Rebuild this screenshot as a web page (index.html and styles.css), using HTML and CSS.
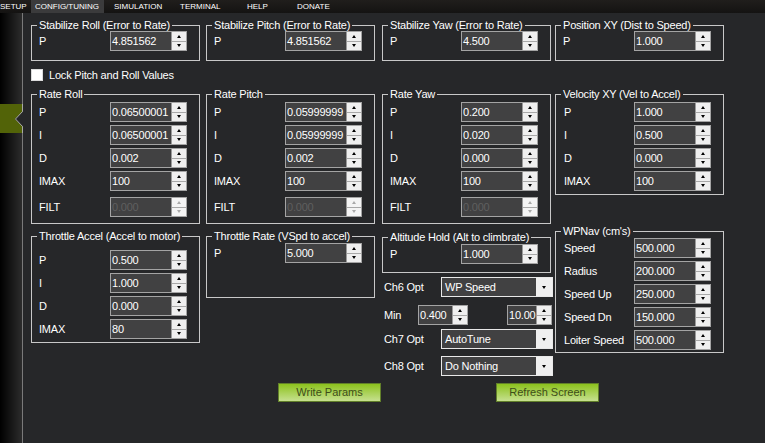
FILE: index.html
```html
<!DOCTYPE html>
<html>
<head>
<meta charset="utf-8">
<link rel="stylesheet" href="styles.css">
</head>
<body>
<div class="topbar">
  <span class="t t-setup">SETUP</span>
  <span class="t t-active">CONFIG/TUNING</span>
  <span class="t t-sim">SIMULATION</span>
  <span class="t t-term">TERMINAL</span>
  <span class="t t-help">HELP</span>
  <span class="t t-don">DONATE</span>
</div>
<div class="main">
  <div class="sidebar">
    <div class="navtab">
      <svg width="23" height="29" viewBox="0 0 23 29">
        <rect x="0" y="0" width="22" height="29" fill="#526308"/>
        <polygon points="23,7.5 15,15 23,22.5" fill="#262729"/>
        <polyline points="22.5,0 22.5,7.5 15.5,15 22.5,22.5 22.5,29" fill="none" stroke="#a8a8a8" stroke-width="1"/>
      </svg>
    </div>
  </div>
  <div class="content">
    <div class="row">
      <div class="group g-stab">
        <span class="legend">Stabilize Roll (Error to Rate)</span>
        <div class="fields">
          <div class="f"><span>P</span><div class="spin"><span class="v">4.851562</span><span class="btns"><span class="b"><i class="up"></i></span><span class="b"><i class="dn"></i></span></span></div></div>
        </div>
      </div>
      <div class="group g-stab">
        <span class="legend">Stabilize Pitch (Error to Rate)</span>
        <div class="fields">
          <div class="f"><span>P</span><div class="spin"><span class="v">4.851562</span><span class="btns"><span class="b"><i class="up"></i></span><span class="b"><i class="dn"></i></span></span></div></div>
        </div>
      </div>
      <div class="group g-stab">
        <span class="legend">Stabilize Yaw (Error to Rate)</span>
        <div class="fields">
          <div class="f"><span>P</span><div class="spin"><span class="v">4.500</span><span class="btns"><span class="b"><i class="up"></i></span><span class="b"><i class="dn"></i></span></span></div></div>
        </div>
      </div>
      <div class="group g-stab">
        <span class="legend">Position XY (Dist to Speed)</span>
        <div class="fields">
          <div class="f"><span>P</span><div class="spin"><span class="v">1.000</span><span class="btns"><span class="b"><i class="up"></i></span><span class="b"><i class="dn"></i></span></span></div></div>
        </div>
      </div>
    </div>

    <div class="check"><span class="box"></span><span>Lock Pitch and Roll Values</span></div>

    <div class="row">
      <div class="group g-rate">
        <span class="legend">Rate Roll</span>
        <div class="fields">
          <div class="f"><span>P</span><div class="spin"><span class="v">0.06500001</span><span class="btns"><span class="b"><i class="up"></i></span><span class="b"><i class="dn"></i></span></span></div></div>
          <div class="f"><span>I</span><div class="spin"><span class="v">0.06500001</span><span class="btns"><span class="b"><i class="up"></i></span><span class="b"><i class="dn"></i></span></span></div></div>
          <div class="f"><span>D</span><div class="spin"><span class="v">0.002</span><span class="btns"><span class="b"><i class="up"></i></span><span class="b"><i class="dn"></i></span></span></div></div>
          <div class="f"><span>IMAX</span><div class="spin"><span class="v">100</span><span class="btns"><span class="b"><i class="up"></i></span><span class="b"><i class="dn"></i></span></span></div></div>
          <div class="f filt"><span>FILT</span><div class="spin dis"><span class="v">0.000</span><span class="btns"><span class="b"><i class="up"></i></span><span class="b"><i class="dn"></i></span></span></div></div>
        </div>
      </div>
      <div class="group g-rate">
        <span class="legend">Rate Pitch</span>
        <div class="fields">
          <div class="f"><span>P</span><div class="spin"><span class="v">0.05999999</span><span class="btns"><span class="b"><i class="up"></i></span><span class="b"><i class="dn"></i></span></span></div></div>
          <div class="f"><span>I</span><div class="spin"><span class="v">0.05999999</span><span class="btns"><span class="b"><i class="up"></i></span><span class="b"><i class="dn"></i></span></span></div></div>
          <div class="f"><span>D</span><div class="spin"><span class="v">0.002</span><span class="btns"><span class="b"><i class="up"></i></span><span class="b"><i class="dn"></i></span></span></div></div>
          <div class="f"><span>IMAX</span><div class="spin"><span class="v">100</span><span class="btns"><span class="b"><i class="up"></i></span><span class="b"><i class="dn"></i></span></span></div></div>
          <div class="f filt"><span>FILT</span><div class="spin dis"><span class="v">0.000</span><span class="btns"><span class="b"><i class="up"></i></span><span class="b"><i class="dn"></i></span></span></div></div>
        </div>
      </div>
      <div class="group g-rate">
        <span class="legend">Rate Yaw</span>
        <div class="fields">
          <div class="f"><span>P</span><div class="spin"><span class="v">0.200</span><span class="btns"><span class="b"><i class="up"></i></span><span class="b"><i class="dn"></i></span></span></div></div>
          <div class="f"><span>I</span><div class="spin"><span class="v">0.020</span><span class="btns"><span class="b"><i class="up"></i></span><span class="b"><i class="dn"></i></span></span></div></div>
          <div class="f"><span>D</span><div class="spin"><span class="v">0.000</span><span class="btns"><span class="b"><i class="up"></i></span><span class="b"><i class="dn"></i></span></span></div></div>
          <div class="f"><span>IMAX</span><div class="spin"><span class="v">100</span><span class="btns"><span class="b"><i class="up"></i></span><span class="b"><i class="dn"></i></span></span></div></div>
          <div class="f filt"><span>FILT</span><div class="spin dis"><span class="v">0.000</span><span class="btns"><span class="b"><i class="up"></i></span><span class="b"><i class="dn"></i></span></span></div></div>
        </div>
      </div>
      <div class="group g-vel">
        <span class="legend">Velocity XY (Vel to Accel)</span>
        <div class="fields">
          <div class="f"><span>P</span><div class="spin"><span class="v">1.000</span><span class="btns"><span class="b"><i class="up"></i></span><span class="b"><i class="dn"></i></span></span></div></div>
          <div class="f"><span>I</span><div class="spin"><span class="v">0.500</span><span class="btns"><span class="b"><i class="up"></i></span><span class="b"><i class="dn"></i></span></span></div></div>
          <div class="f"><span>D</span><div class="spin"><span class="v">0.000</span><span class="btns"><span class="b"><i class="up"></i></span><span class="b"><i class="dn"></i></span></span></div></div>
          <div class="f"><span>IMAX</span><div class="spin"><span class="v">100</span><span class="btns"><span class="b"><i class="up"></i></span><span class="b"><i class="dn"></i></span></span></div></div>
        </div>
      </div>
    </div>

    <div class="row row3">
      <div class="group g-thr">
        <span class="legend">Throttle Accel (Accel to motor)</span>
        <div class="fields">
          <div class="f"><span>P</span><div class="spin"><span class="v">0.500</span><span class="btns"><span class="b"><i class="up"></i></span><span class="b"><i class="dn"></i></span></span></div></div>
          <div class="f"><span>I</span><div class="spin"><span class="v">1.000</span><span class="btns"><span class="b"><i class="up"></i></span><span class="b"><i class="dn"></i></span></span></div></div>
          <div class="f"><span>D</span><div class="spin"><span class="v">0.000</span><span class="btns"><span class="b"><i class="up"></i></span><span class="b"><i class="dn"></i></span></span></div></div>
          <div class="f"><span>IMAX</span><div class="spin"><span class="v">80</span><span class="btns"><span class="b"><i class="up"></i></span><span class="b"><i class="dn"></i></span></span></div></div>
        </div>
      </div>
      <div class="group g-thrrate">
        <span class="legend">Throttle Rate (VSpd to accel)</span>
        <div class="fields">
          <div class="f"><span>P</span><div class="spin"><span class="v">5.000</span><span class="btns"><span class="b"><i class="up"></i></span><span class="b"><i class="dn"></i></span></span></div></div>
        </div>
      </div>
      <div class="col3">
        <div class="group g-alt">
          <span class="legend">Altitude Hold (Alt to climbrate)</span>
          <div class="fields">
            <div class="f"><span>P</span><div class="spin"><span class="v">1.000</span><span class="btns"><span class="b"><i class="up"></i></span><span class="b"><i class="dn"></i></span></span></div></div>
          </div>
        </div>
        <div class="opt o6"><span class="lbl">Ch6 Opt</span><div class="combo"><span class="v">WP Speed</span><span class="dd"><i class="dn"></i></span></div></div>
        <div class="opt omin"><span class="lbl-min">Min</span><div class="spin s-min"><span class="v">0.400</span><span class="btns"><span class="b"><i class="up"></i></span><span class="b"><i class="dn"></i></span></span></div><div class="spin s-max"><span class="v">10.00</span><span class="btns"><span class="b"><i class="up"></i></span><span class="b"><i class="dn"></i></span></span></div></div>
        <div class="opt o7"><span class="lbl">Ch7 Opt</span><div class="combo"><span class="v">AutoTune</span><span class="dd"><i class="dn"></i></span></div></div>
        <div class="opt o8"><span class="lbl">Ch8 Opt</span><div class="combo"><span class="v">Do Nothing</span><span class="dd"><i class="dn"></i></span></div></div>
      </div>
      <div class="group g-wp">
        <span class="legend">WPNav (cm's)</span>
        <div class="fields">
          <div class="f"><span>Speed</span><div class="spin"><span class="v">500.000</span><span class="btns"><span class="b"><i class="up"></i></span><span class="b"><i class="dn"></i></span></span></div></div>
          <div class="f"><span>Radius</span><div class="spin"><span class="v">200.000</span><span class="btns"><span class="b"><i class="up"></i></span><span class="b"><i class="dn"></i></span></span></div></div>
          <div class="f"><span>Speed Up</span><div class="spin"><span class="v">250.000</span><span class="btns"><span class="b"><i class="up"></i></span><span class="b"><i class="dn"></i></span></span></div></div>
          <div class="f"><span>Speed Dn</span><div class="spin"><span class="v">150.000</span><span class="btns"><span class="b"><i class="up"></i></span><span class="b"><i class="dn"></i></span></span></div></div>
          <div class="f"><span>Loiter Speed</span><div class="spin"><span class="v">500.000</span><span class="btns"><span class="b"><i class="up"></i></span><span class="b"><i class="dn"></i></span></span></div></div>
        </div>
      </div>
    </div>

    <div class="actions">
      <div class="btn">Write Params</div>
      <div class="btn">Refresh Screen</div>
    </div>
  </div>
</div>
</body>
</html>
```

FILE: styles.css
```css
* { box-sizing: border-box; }
html, body { margin: 0; padding: 0; }
body {
  width: 765px;
  height: 443px;
  overflow: hidden;
  background: #262729;
  color: #fff;
  font-family: "Liberation Sans", Arial, sans-serif;
  font-size: 11px;
  letter-spacing: -0.2px;
}

/* top menu */
.topbar {
  display: flex;
  height: 13px;
  background: linear-gradient(#201e1c, #141312);
  font-size: 8px;
  line-height: 13px;
  letter-spacing: 0;
  color: #fff;
}
.t { flex: none; white-space: nowrap; }
.t-setup { width: 31px; }
.t-active { width: 73px; padding-left: 4px; background: #3b3b3c; }
.t-sim { width: 76px; padding-left: 10px; }
.t-term { width: 67px; }
.t-help { width: 50px; }
.t-don { width: 40px; }

/* main */
.main { display: flex; height: 430px; }
.sidebar {
  flex: none;
  width: 23px;
  background: linear-gradient(to right, #000 0, #101010 8px, #2c2c2c 22px, #7a7a7a 22px, #7a7a7a 23px);
}
.navtab { margin-top: 91px; height: 29px; }
.navtab svg { display: block; }

.content { flex: 1; padding: 12px 0 0 8px; }

.row {
  display: grid;
  grid-template-columns: 175px 176px 173px 169px;
  align-items: start;
}
.row3 { margin-top: 7px; }

/* group boxes */
.group {
  width: 169px;
  border: 1px solid #c8c8c8;
}
.legend {
  display: block;
  width: max-content;
  margin: -7px 0 -6px 5px;
  padding: 0 2px;
  line-height: 13px;
  background: #262729;
  white-space: nowrap;
}
.fields { display: flex; flex-direction: column; gap: 3px; }
.f {
  display: flex;
  align-items: center;
  justify-content: space-between;
  height: 20px;
  padding: 0 12px 0 7px;
  white-space: nowrap;
}
.f.filt { margin-top: 3px; }

.g-stab { padding-bottom: 9px; }
.g-stab .fields { padding-top: 5px; }
.g-rate { padding-bottom: 6px; }
.g-rate .fields { padding-top: 7px; }
.g-vel { padding-bottom: 3px; }
.g-vel .fields { padding-top: 7px; }
.g-thr { margin-top: 5px; padding-bottom: 3px; }
.g-thr .fields { padding-top: 13px; }
.g-thrrate { margin-top: 5px; padding-bottom: 34px; }
.g-thrrate .fields { padding-top: 6px; }
.g-alt { margin-top: 6px; padding-bottom: 8px; }
.g-alt .fields { padding-top: 6px; }
.g-wp { padding-bottom: 2px; }
.g-wp .fields { padding-top: 6px; }
.g-wp .f, .g-vel .f { padding-left: 8px; }

/* spinner */
.spin {
  flex: none;
  display: flex;
  width: 77px;
  height: 20px;
  border: 1px solid #a4a4a4;
  background: #414142;
}
.spin .v {
  flex: 1;
  min-width: 0;
  overflow: hidden;
  white-space: nowrap;
  padding-left: 1px;
  line-height: 18px;
  color: #fff;
}
.btns {
  flex: none;
  width: 15px;
  display: flex;
  flex-direction: column;
  background: #efefef;
  border-left: 1px solid #9a9a9a;
}
.btns .b {
  flex: 1;
  display: flex;
  align-items: center;
  justify-content: center;
}
.btns .b + .b { border-top: 1px solid #a8a8a8; }
.up, .dn {
  display: block;
  width: 1px;
  height: 0;
  border-left: 2px solid transparent;
  border-right: 2px solid transparent;
}
.up { border-bottom: 3px solid #000; }
.dn { border-top: 3px solid #000; }
.spin.dis .v { color: #5f5f5f; }
.spin.dis .btns { background: #f4f4f4; }
.spin.dis .up { border-bottom-color: #a9a9a9; }
.spin.dis .dn { border-top-color: #a9a9a9; }

/* column 3 options */
.col3 { display: flex; flex-direction: column; }
.opt {
  display: flex;
  align-items: center;
  height: 20px;
  padding: 0 3px 0 2px;
  white-space: nowrap;
}
.opt .lbl { width: 57px; flex: none; }
.opt .lbl-min { width: 34px; flex: none; }
.o6 { margin-top: 4px; }
.omin { margin-top: 8px; }
.o7 { margin-top: 4px; }
.o8 { margin-top: 7px; }
.spin.s-min { width: 50px; }
.spin.s-max { width: 45px; margin-left: auto; }

.combo {
  flex: none;
  display: flex;
  width: 112px;
  height: 20px;
  border: 1px solid #e8e8e8;
  background: #414142;
}
.combo .v {
  flex: 1;
  padding-left: 3px;
  line-height: 18px;
  white-space: nowrap;
  overflow: hidden;
}
.combo .dd {
  flex: none;
  width: 16px;
  background: #efefef;
  display: flex;
  align-items: center;
  justify-content: center;
}

/* checkbox */
.check {
  display: flex;
  align-items: center;
  gap: 6px;
  height: 12px;
  margin: 8px 0 13px;
  line-height: 12px;
}
.check .box {
  flex: none;
  width: 12px;
  height: 12px;
  background: #fff;
  border: 1px solid #dcdcdc;
}

/* buttons */
.actions {
  display: flex;
  gap: 115px;
  margin-top: 7px;
  padding-left: 247px;
}
.btn {
  width: 103px;
  height: 19px;
  border: 1px solid #62802a;
  background: linear-gradient(#8cc21d, #c6e08f);
  color: #3e4d1a;
  text-align: center;
  line-height: 17px;
  letter-spacing: 0;
}
```
